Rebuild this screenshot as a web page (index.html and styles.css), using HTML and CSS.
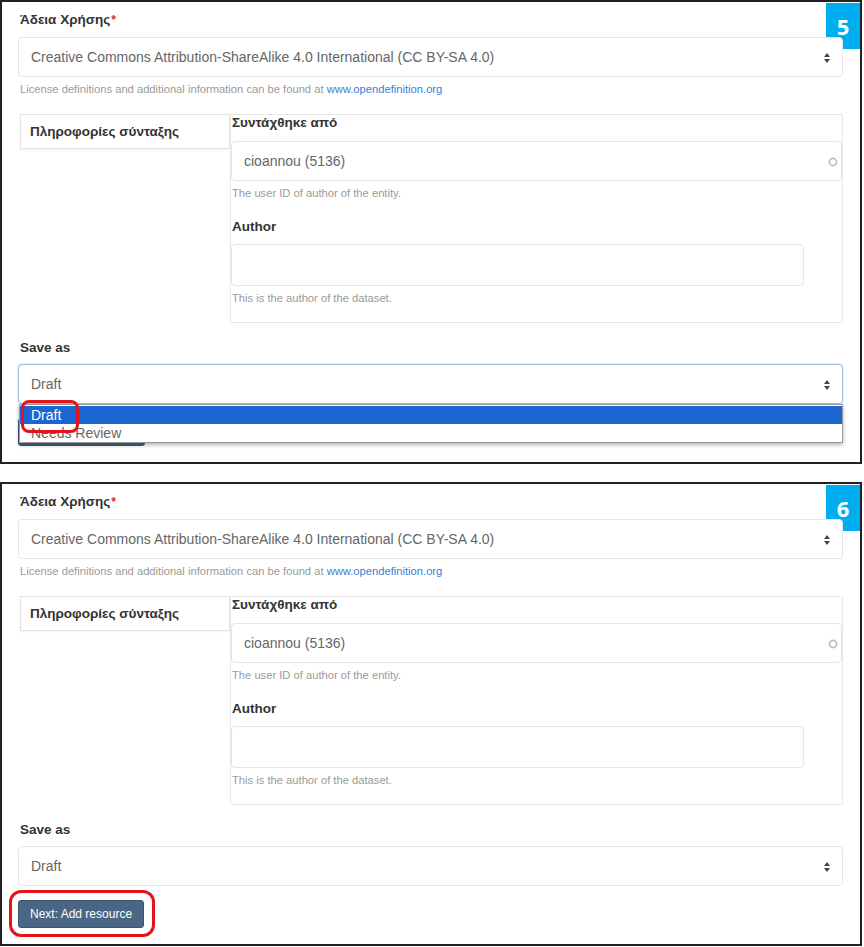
FILE: index.html
```html
<!DOCTYPE html>
<html lang="el">
<head>
  <meta charset="UTF-8" />
  <meta name="viewport" content="width=device-width, initial-scale=1.0" />
  <title>Dataset form – steps 5 and 6</title>
  <link rel="stylesheet" href="styles.css">
</head>
<body>

  <!-- Step 5: picking "Draft" from the open list -->
  <section class="shot">
    <span class="step">5</span>

    <label class="field-label">Άδεια Χρήσης<span class="req">*</span></label>
    <div class="select">
      Creative Commons Attribution-ShareAlike 4.0 International (CC BY-SA 4.0)
      <svg class="caret" width="6" height="10" viewBox="0 0 6 10"><path d="M3 0L6 4H0z M3 10L0 6h6z" fill="#444"/></svg>
    </div>
    <p class="help">License definitions and additional information can be found at <a href="#">www.opendefinition.org</a></p>

    <div class="authoring">
      <div class="tab">Πληροφορίες σύνταξης</div>
      <div class="authoring-body">
        <label class="field-label">Συντάχθηκε από</label>
        <div class="input">
          cioannou (5136)
          <svg class="ring" width="10" height="10" viewBox="0 0 10 10"><circle cx="5" cy="5" r="3.6" fill="none" stroke="#bbb" stroke-width="1.6"/></svg>
        </div>
        <p class="help">The user ID of author of the entity.</p>
        <label class="field-label field-label-gap">Author</label>
        <div class="input input-short"></div>
        <p class="help">This is the author of the dataset.</p>
      </div>
    </div>

    <label class="field-label save-label">Save as</label>
    <div class="select-wrap">
      <div class="select is-focused">
        Draft
        <svg class="caret" width="6" height="10" viewBox="0 0 6 10"><path d="M3 0L6 4H0z M3 10L0 6h6z" fill="#444"/></svg>
      </div>
      <ul class="dropdown">
        <li class="option is-selected"><span class="marked">Draft</span></li>
        <li class="option">Needs Review</li>
      </ul>
    </div>
    <!-- button sits under the open list, only its lower edge shows -->
    <button class="btn btn-hidden" aria-hidden="true"></button>
  </section>

  <!-- Step 6: continue to resources -->
  <section class="shot">
    <span class="step">6</span>

    <label class="field-label">Άδεια Χρήσης<span class="req">*</span></label>
    <div class="select">
      Creative Commons Attribution-ShareAlike 4.0 International (CC BY-SA 4.0)
      <svg class="caret" width="6" height="10" viewBox="0 0 6 10"><path d="M3 0L6 4H0z M3 10L0 6h6z" fill="#444"/></svg>
    </div>
    <p class="help">License definitions and additional information can be found at <a href="#">www.opendefinition.org</a></p>

    <div class="authoring">
      <div class="tab">Πληροφορίες σύνταξης</div>
      <div class="authoring-body">
        <label class="field-label">Συντάχθηκε από</label>
        <div class="input">
          cioannou (5136)
          <svg class="ring" width="10" height="10" viewBox="0 0 10 10"><circle cx="5" cy="5" r="3.6" fill="none" stroke="#bbb" stroke-width="1.6"/></svg>
        </div>
        <p class="help">The user ID of author of the entity.</p>
        <label class="field-label field-label-gap">Author</label>
        <div class="input input-short"></div>
        <p class="help">This is the author of the dataset.</p>
      </div>
    </div>

    <label class="field-label save-label">Save as</label>
    <div class="select-wrap">
      <div class="select">
        Draft
        <svg class="caret" width="6" height="10" viewBox="0 0 6 10"><path d="M3 0L6 4H0z M3 10L0 6h6z" fill="#444"/></svg>
      </div>
    </div>
    <button class="btn btn-marked">Next: Add resource</button>
  </section>

</body>
</html>
```

FILE: styles.css
```css
* {
  box-sizing: border-box;
}

body {
  margin: 0;
  background: #fff;
  font-family: 'Liberation Sans', Arial, sans-serif;
  color: #333;
}

.shot {
  position: relative;
  width: 862px;
  border: 2px solid #222;
  padding: 10px 17px 16px 16px;
  margin-bottom: 18px;
  background: #fff;
}

.step {
  position: absolute;
  top: 1px;
  right: 0;
  width: 34px;
  height: 46px;
  background: #00aeef;
  color: #fff;
  font-family: 'Open Sans', sans-serif;
  font-weight: bold;
  font-size: 22px;
  display: flex;
  align-items: center;
  justify-content: center;
}

.field-label {
  display: block;
  font-size: 13.5px;
  line-height: 16px;
  font-weight: bold;
  color: #333;
  padding-left: 2px;
}

.req {
  color: #e0262b;
  font-size: 12px;
  margin-left: 1px;
}

.select,
.input {
  position: relative;
  display: flex;
  align-items: center;
  height: 40px;
  padding: 0 12px;
  border: 1px solid #e3e6ea;
  border-radius: 4px;
  background: #fff;
  font-size: 14px;
  color: #666;
}

.select {
  margin-top: 9px;
}

.caret {
  position: absolute;
  right: 12px;
  top: 15px;
}

.select.is-focused {
  border-color: #a9bfd8;
  box-shadow: 0 0 2px rgba(90, 130, 190, 0.45);
}

.help {
  margin: 5px 0 0;
  font-size: 11.2px;
  line-height: 14px;
  color: #9a9a9a;
  padding-left: 2px;
}

.help a {
  color: #3a7fd5;
  text-decoration: none;
}

/* authoring block: tab on the left, fields on the right */
.authoring {
  display: grid;
  grid-template-columns: 210px 1fr;
  margin: 18px 0 0 2px;
}

.tab {
  height: 35px;
  border: 1px solid #e2e2e2;
  box-shadow: 0 1px 2px rgba(0, 0, 0, 0.06);
  padding-left: 9px;
  display: flex;
  align-items: center;
  font-size: 13.5px;
  font-weight: bold;
  color: #333;
}

.authoring-body {
  border: 1px solid #e8e8e8;
  border-radius: 2px;
  padding: 0 0 17px 0;
}

.authoring-body .field-label {
  padding-left: 1px;
}

.authoring-body .help {
  padding-left: 1px;
}

.input {
  margin-top: 10px;
}

.ring {
  position: absolute;
  right: 3px;
  top: 15px;
}

.field-label-gap {
  margin-top: 19px;
}

.input-short {
  margin-top: 9px;
  height: 42px;
  width: 573px;
}

.save-label {
  margin-top: 17px;
}

.select-wrap {
  position: relative;
}

.select-wrap .select {
  margin-top: 8px;
}

/* open option list of the "Save as" select */
.dropdown {
  position: absolute;
  z-index: 2;
  top: 100%;
  left: 1px;
  right: 0;
  margin: 0;
  padding: 1px 0 0;
  list-style: none;
  background: #fff;
  border: 1px solid #9a9a9a;
  box-shadow: 0 2px 4px rgba(0, 0, 0, 0.3);
}

.option {
  height: 18px;
  line-height: 18px;
  padding-left: 11px;
  font-size: 14px;
  color: #666;
}

.option.is-selected {
  background: #1c66d1;
  color: #fff;
}

.marked {
  position: relative;
}

.marked::after {
  content: "";
  position: absolute;
  left: -10px;
  top: -7px;
  width: 52px;
  height: 27px;
  border: 3px solid #e3141d;
  border-radius: 8px;
}

.btn {
  position: relative;
  display: block;
  margin-top: 14px;
  height: 28px;
  padding: 0 11px;
  background: #4a6684;
  border: 1px solid #3c556f;
  border-radius: 3px;
  color: #fff;
  font-family: inherit;
  font-size: 12px;
}

.btn-hidden {
  width: 127px;
}

.btn-marked::after {
  content: "";
  position: absolute;
  top: -11px;
  right: -12px;
  bottom: -10px;
  left: -10px;
  border: 3px solid #e3141d;
  border-radius: 12px;
}
```
